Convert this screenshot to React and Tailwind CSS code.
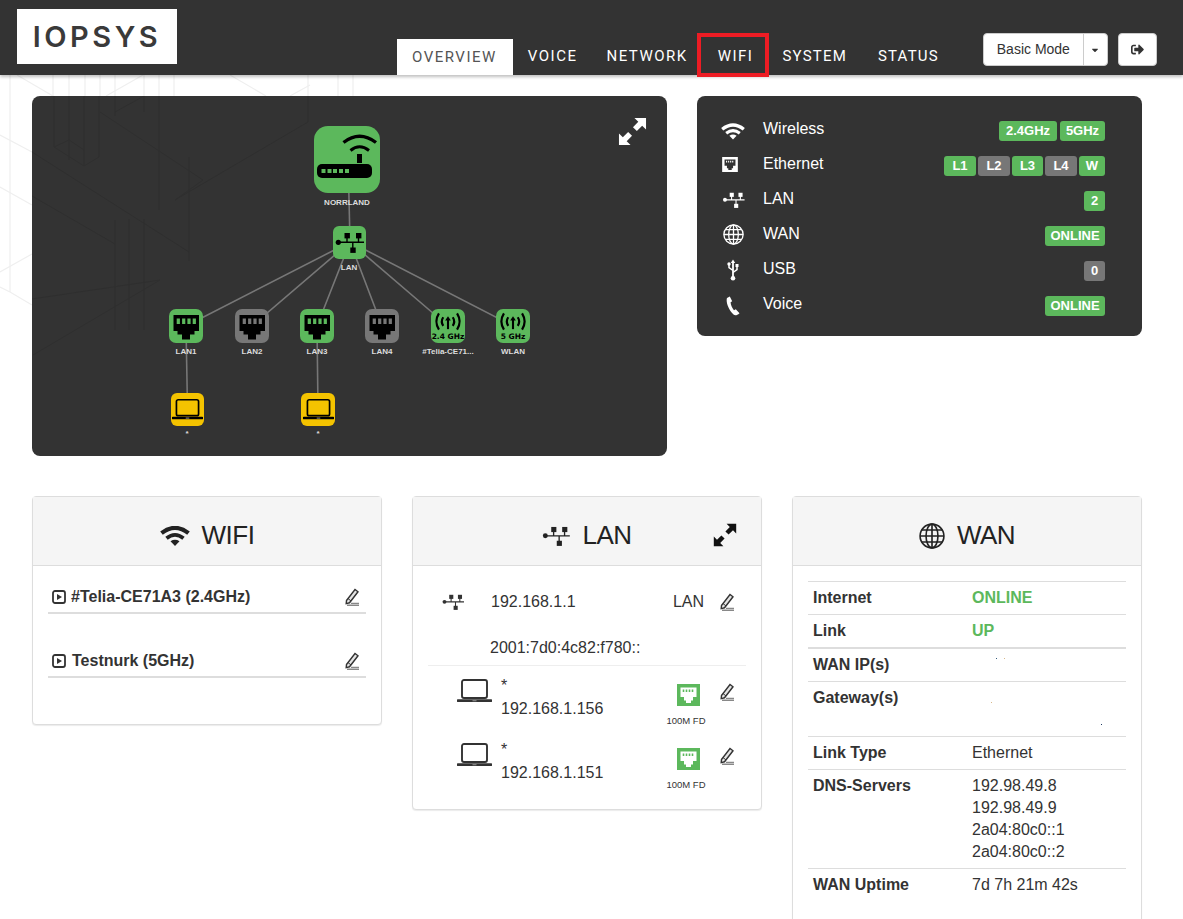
import { FaCaretDown, FaSignOutAlt } from 'react-icons/fa';

const green = 'bg-[#5cb85c]';
const gray = 'bg-[#777777]';

// --- icons ---
const WifiIcon = ({ className }) => (
  <svg viewBox="0 0 30 20" className={className} fill="none" stroke="currentColor">
    <path d="M1.5 7.2 Q15 -3.4 28.5 7.2" strokeWidth="4.2" />
    <path d="M6.5 12.2 Q15 5.5 23.5 12.2" strokeWidth="3.8" />
    <path d="M10.5 15.2 Q15 12.4 19.5 15.2 L15 20 Z" fill="currentColor" stroke="none" />
  </svg>
);

const NetIcon = ({ className }) => (
  <svg viewBox="2 6 29 21" className={className} fill="currentColor" stroke="currentColor">
    <circle cx="5.3" cy="16.3" r="2.6" stroke="none" />
    <path d="M5 16.3H31M14 10v6M25.5 10v6M19.8 16v8" fill="none" strokeWidth="1.4" />
    <rect x="11.5" y="7" width="5.4" height="5.4" stroke="none" />
    <rect x="23" y="7" width="5.4" height="5.4" stroke="none" />
    <rect x="17.3" y="21.5" width="5.4" height="5.4" stroke="none" />
  </svg>
);

const GlobeIcon = ({ className }) => (
  <svg viewBox="0 0 24 24" className={className} fill="none" stroke="currentColor" strokeWidth="1.5">
    <circle cx="12" cy="12" r="11" />
    <ellipse cx="12" cy="12" rx="5.5" ry="11" />
    <path d="M12 1v22M1 12h22M2.6 6.5h18.8M2.6 17.5h18.8" />
  </svg>
);

const ExpandIcon = ({ className }) => (
  <svg viewBox="0 0 30 30" className={className} fill="currentColor">
    <path d="M17 1H29V13L25 9L19.5 14.5L15.5 10.5L21 5Z" />
    <path d="M13 29H1V17L5 21L10.5 15.5L14.5 19.5L9 25Z" />
  </svg>
);

const PencilIcon = () => (
  <svg viewBox="0 0 14 18" className="w-[14px] h-[18px]" fill="none">
    <path d="M1.5 12.5 L10 1.5 L13 3.8 L4.5 14.8 L1.2 15.6 Z" fill="#e4e4e4" stroke="#333" strokeWidth="1.4" />
    <path d="M3 10.5 L6 13" stroke="#333" strokeWidth="1" />
    <path d="M6 15.4H14M2 17.2H14" stroke="#888" strokeWidth="1.4" />
  </svg>
);

const PlayBox = () => (
  <svg viewBox="0 0 14 14" className="w-[14px] h-[14px] shrink-0" fill="none">
    <rect x="1" y="1" width="12" height="12" rx="2" stroke="#333" strokeWidth="1.8" />
    <path d="M5 4L10 7L5 10Z" fill="#333" />
  </svg>
);

const LaptopIcon = ({ className }) => (
  <svg viewBox="0 0 35 24" className={className} fill="none" stroke="currentColor">
    <rect x="5" y="1" width="25" height="18" rx="2" strokeWidth="1.9" />
    <path d="M1 21.7H34" strokeWidth="2.8" strokeLinecap="round" />
    <path d="M15.5 21.7H19.5" stroke="#888" strokeWidth="1.2" />
  </svg>
);

const PhoneIcon = ({ className }) => (
  <svg viewBox="0 0 14 20" className={className} fill="currentColor">
    <path d="M3.8 0.5 L1 2 C-0.2 5.5 1.8 13 7.5 18.5 C9 19.8 11 19.5 13.5 17.2 L9.8 13.2 L8 14.2 C6.3 12.3 4.6 8.8 4.6 6.3 L6.2 5.3 Z" />
  </svg>
);

const UsbIcon = ({ className }) => (
  <svg viewBox="0 0 12 22" className={className} fill="currentColor" stroke="currentColor">
    <path d="M6 0.5L8.2 4H3.8Z" stroke="none" />
    <path d="M6 3.5V18" fill="none" strokeWidth="1.8" />
    <path d="M10 7.5V10.5L6 13.5M2 5.5V8.5L6 11.5" fill="none" strokeWidth="1.5" />
    <rect x="8.5" y="5" width="3" height="3" stroke="none" />
    <circle cx="2" cy="5" r="1.7" stroke="none" />
    <circle cx="6" cy="19.3" r="2.3" stroke="none" />
  </svg>
);

// port with the jack cut out, used in the status panel and the client rows
const PortBox = ({ className, cut, pin }) => (
  <svg viewBox="0 0 23 22" className={className}>
    <rect width="23" height="22" fill="currentColor" />
    <path d="M3.5 3.5H19.5V13H16V16.5H14V19H9V16.5H7V13H3.5Z" fill={cut} />
    <path d="M6.5 5.5V8M9.5 5.5V8M12.5 5.5V8M15.5 5.5V8" stroke={pin} strokeWidth="1.6" />
  </svg>
);

const JackGlyph = ({ pin }) => (
  <svg viewBox="0 0 34 34" className="w-full h-full">
    <path d="M4.5 6H30V22H25.5V25.5H21V30.5H13V25.5H8.5V22H4.5Z" fill="#000" />
    <path d="M9.3 9.5V15M14.7 9.5V15M20 9.5V15M25.3 9.5V15" stroke={pin} strokeWidth="3.2" />
  </svg>
);

const AntennaGlyph = () => (
  <svg viewBox="0 0 34 21" className="w-[34px] h-[20px]" fill="none" stroke="#000" strokeWidth="2.3">
    <path d="M7.5 1.5C4 7 4 13 7.5 18.5M26.5 1.5C30 7 30 13 26.5 18.5" />
    <path d="M12 5.5C10 8.5 10 11.5 12 14.5M22 5.5C24 8.5 24 11.5 22 14.5" />
    <path d="M17 4.5L20 9H14Z" fill="#000" stroke="none" />
    <path d="M17 8V18" strokeWidth="2.2" />
  </svg>
);

// --- diagram ---
const Label = ({ className, children }) => (
  <span className={`absolute -translate-x-1/2 text-[8px] leading-[10px] font-bold text-[#dddddd] whitespace-nowrap ${className}`}>
    {children}
  </span>
);

const TopologyNode = ({ className, color, children }) => (
  <div className={`absolute w-[34px] h-[34px] rounded-[7px] flex flex-col items-center ${color} ${className}`}>
    {children}
  </div>
);

const Topology = () => (
  <>
    <svg viewBox="0 0 635 360" className="absolute inset-0 w-full h-full" fill="none" stroke="#777777" strokeWidth="1.6">
      <path d="M316 60L318 146" />
      <path d="M318 146L154 230M318 146L220 230M318 146L285 230M318 146L350 230M318 146L416 230M318 146L481 230" />
      <path d="M154 230L155.5 313M285 230L286 313" />
    </svg>

    <div className="absolute left-[282px] top-[30px] w-[66px] h-[67px] rounded-[14px] bg-[#5cb85c]">
      <svg viewBox="0 0 66 67" className="w-full h-full">
        <path d="M29.5 16.5Q45.5 4 62 16.5" fill="none" stroke="#000" strokeWidth="3.4" />
        <path d="M36.5 24.5Q45.5 17 55 24.5" fill="none" stroke="#000" strokeWidth="3" />
        <rect x="43" y="28" width="5" height="9" fill="#000" />
        <rect x="3" y="38" width="55" height="14" rx="5" fill="#000" />
        <path d="M7.5 43h4v4h-4zM13.5 43h4v4h-4zM19 43h4v4h-4zM25 43h4v4h-4zM31 43h4v4h-4z" fill="#5cb85c" />
      </svg>
    </div>
    <Label className="left-[315px] top-[102px]">NORRLAND</Label>

    <div className="absolute left-[301px] top-[130px] w-[33px] h-[33px] rounded-[6px] bg-[#5cb85c] flex items-center justify-center">
      <NetIcon className="w-[29px] h-[21px] text-black" />
    </div>
    <Label className="left-[317px] top-[167px]">LAN</Label>

    <TopologyNode className="left-[137px] top-[213px]" color={green}><JackGlyph pin="#5cb85c" /></TopologyNode>
    <Label className="left-[154px] top-[251px]">LAN1</Label>
    <TopologyNode className="left-[203px] top-[213px]" color={gray}><JackGlyph pin="#777777" /></TopologyNode>
    <Label className="left-[220px] top-[251px]">LAN2</Label>
    <TopologyNode className="left-[268px] top-[213px]" color={green}><JackGlyph pin="#5cb85c" /></TopologyNode>
    <Label className="left-[285px] top-[251px]">LAN3</Label>
    <TopologyNode className="left-[333px] top-[213px]" color={gray}><JackGlyph pin="#777777" /></TopologyNode>
    <Label className="left-[350px] top-[251px]">LAN4</Label>

    <TopologyNode className="left-[399px] top-[213px] pt-[3px]" color={green}>
      <AntennaGlyph />
      <span className="mt-[1px] font-['DejaVu_Sans'] font-bold text-[7.5px] leading-[7px] text-black whitespace-nowrap">2.4 GHz</span>
    </TopologyNode>
    <Label className="left-[416px] top-[251px]">#Telia-CE71...</Label>
    <TopologyNode className="left-[464px] top-[213px] pt-[3px]" color={green}>
      <AntennaGlyph />
      <span className="mt-[1px] font-['DejaVu_Sans'] font-bold text-[7.5px] leading-[7px] text-black whitespace-nowrap">5 GHz</span>
    </TopologyNode>
    <Label className="left-[481px] top-[251px]">WLAN</Label>

    <div className="absolute left-[139px] top-[297px] w-[33px] h-[33px] rounded-[6px] bg-[#f4c300] flex items-center justify-center">
      <LaptopIcon className="w-[31px] h-[23px] text-black" />
    </div>
    <Label className="left-[155px] top-[333px]">*</Label>
    <div className="absolute left-[269px] top-[297px] w-[34px] h-[33px] rounded-[6px] bg-[#f4c300] flex items-center justify-center">
      <LaptopIcon className="w-[31px] h-[23px] text-black" />
    </div>
    <Label className="left-[286px] top-[333px]">*</Label>
  </>
);

// --- status panel ---
const Badge = ({ on = true, className, children }) => (
  <span className={`h-[20px] flex items-center justify-center rounded-[3px] text-[13px] font-bold text-white ${on ? green : gray} ${className}`}>
    {children}
  </span>
);

const StatusRow = ({ icon, label, children }) => (
  <div className="h-[35px] flex items-center">
    <div className="w-[24px] mt-[2px] flex justify-center text-white">{icon}</div>
    <span className="ml-[18px] text-[16px] text-white">{label}</span>
    <div className="ml-auto mt-[5px] flex gap-[2px]">{children}</div>
  </div>
);

const CardHead = ({ icon, title, extra }) => (
  <div className="relative h-[69px] pt-[9px] bg-[#f5f5f5] border-b border-[#dddddd] flex items-center justify-center gap-[12px] text-[#222222]">
    {icon}
    <span className="text-[26px] tracking-[-0.5px]">{title}</span>
    {extra}
  </div>
);

const Card = ({ className, children }) => (
  <div className={`w-[350px] bg-white border border-[#dddddd] rounded-[4px] shadow-[0_1px_1px_rgba(0,0,0,.08)] ${className}`}>
    {children}
  </div>
);

const WifiRow = ({ className, gap, children }) => (
  <div className={`h-[34px] pt-[2px] flex items-center border-b-2 border-[#dddddd] pl-[4px] pr-[7px] ${className}`}>
    <PlayBox />
    <span className={`font-bold text-[16px] text-[#333333] ${gap}`}>{children}</span>
    <span className="ml-auto"><PencilIcon /></span>
  </div>
);

const ClientRow = ({ ip }) => (
  <div className="h-[64px] flex">
    <LaptopIcon className="w-[35px] h-[24px] ml-[29px] mt-[13px] text-[#333333]" />
    <div className="ml-[9px] mt-[7px] text-[16px] leading-[25px] text-[#333333]">
      <div className="h-[23px]">*</div>
      <div>{ip}</div>
    </div>
    <div className="ml-auto mr-[7px] flex">
      <div className="w-[68px] mt-[18px] flex flex-col items-center">
        <PortBox className="w-[23px] h-[22px] ml-[4px] text-[#5cb85c]" cut="#ffffff" pin="#5cb85c" />
        <span className="mt-[9px] text-[9.5px] leading-[12px] text-[#333333]">100M FD</span>
      </div>
      <div className="w-[19px] pt-[17px]"><PencilIcon /></div>
    </div>
  </div>
);

const WanRow = ({ label, className = '', children }) => (
  <div className={`flex border-t border-[#dddddd] px-[5px] py-[5px] text-[16px] leading-[22px] text-[#333333] ${className}`}>
    <div className="w-[159px] font-bold">{label}</div>
    <div className="relative flex-1">{children}</div>
  </div>
);

export default function App() {
  return (
    <div className="relative h-[919px] overflow-hidden bg-white font-['Liberation_Sans',sans-serif]">
      {/* faint line work behind the page */}
      <svg viewBox="0 0 400 320" className="absolute left-0 top-0 w-[400px] h-[320px]" fill="none" stroke="#efefef" strokeWidth="1.2">
        <path d="M10 75V292M53 75V96M69 75V96M85 75V96M100 75V96M115 75V96M144 75V96M159 75V96M174 75V96M308 75V96M338 75V96M353 75V96" />
        <path d="M0 135L32 152M0 187L32 205M0 272L32 254M0 287L10 292L32 305M17 75L53 96M143 75L106 96M230 75L266 96M310 85L290 96" />
      </svg>

      <header className="relative h-[75px] bg-[#333333] shadow-[0_2px_3px_rgba(0,0,0,.25)] flex">
        <div className="ml-[17px] mt-[9px] w-[160px] h-[55px] bg-white flex items-center justify-center">
          <span className="font-['Inter'] font-semibold text-[29px] leading-none tracking-[3.5px] text-[#3a3a3a]">IOPSYS</span>
        </div>

        <nav className="ml-[220px] flex self-end font-['Roboto'] text-[15px] tracking-[1.5px] text-white h-[36px]">
          <a className="pl-[15px] pr-[16px] bg-white text-[#555555] flex items-center">OVERVIEW</a>
          <a className="px-[15px] flex items-center -mt-[1px]">VOICE</a>
          <a className="px-[15px] -ml-px flex items-center -mt-[1px]">NETWORK</a>
          <a className="relative px-[15px] flex items-center -mt-[1px]">
            WIFI
            <span className="absolute -left-[6px] -right-[1px] -top-[5px] -bottom-[2px] border-[4px] border-[#ed1c24]" />
          </a>
          <a className="px-[15px] -ml-px flex items-center -mt-[1px] tracking-[1.2px]">SYSTEM</a>
          <a className="px-[15px] ml-[1px] flex items-center -mt-[1px] tracking-[1.2px]">STATUS</a>
        </nav>

        <div className="ml-[29px] mt-[33px] flex h-[33px] items-start text-[14px] text-[#333333]">
          <button className="h-[33px] w-[101px] bg-white border border-[#cccccc] rounded-l-[4px]">Basic Mode</button>
          <button className="h-[33px] w-[25px] -ml-px bg-white border border-[#cccccc] rounded-r-[4px] flex items-center justify-center">
            <FaCaretDown className="w-[10px] h-[10px]" />
          </button>
          <button className="h-[33px] w-[39px] ml-[10px] bg-white border border-[#cccccc] rounded-[4px] flex items-center justify-center">
            <FaSignOutAlt className="w-[13px] h-[13px]" />
          </button>
        </div>
      </header>

      <main className="relative pl-[32px]">
        <section className="pt-[21px] flex items-start gap-[30px]">
          <div className="relative w-[635px] h-[360px] rounded-[8px] bg-[#333333]">
            <svg viewBox="0 0 635 360" className="absolute inset-0 w-full h-full" fill="none" stroke="#2f2f2f" strokeWidth="1">
              <path d="M22 0V51M37 0V64M52 0V70M67 0V61M83 0V20M112 0V16M127 0V114M157 61V165M83 124V234M97 123V234M112 123V234M276 0V26" />
              <path d="M0 56L157 156M68 16L171 84M143 104L276 26M143 104L171 84M22 51L52 70L67 61M22 51L37 44L52 54M128 184L1 259M0 203L128 184M0 100L83 148M83 16L112 0" />
            </svg>
            <Topology />
            <ExpandIcon className="absolute right-[20px] top-[21px] w-[29px] h-[29px] text-white" />
          </div>

          <div className="w-[445px] h-[240px] rounded-[8px] bg-[#333333] pt-[15px] pl-[24px] pr-[37px]">
            <StatusRow icon={<WifiIcon className="w-[24px] h-[17px] mt-[3px]" />} label="Wireless">
              <Badge className="w-[58px] mr-[1px]">2.4GHz</Badge><Badge className="w-[45px]">5GHz</Badge>
            </StatusRow>
            <StatusRow icon={<PortBox className="w-[16px] h-[15px] -translate-x-[3px] text-white" cut="#333333" pin="#ffffff" />} label="Ethernet">
              <Badge className="w-[32px]">L1</Badge>
              <Badge on={false} className="w-[32px]">L2</Badge>
              <Badge className="w-[31px]">L3</Badge>
              <Badge on={false} className="w-[32px]">L4</Badge>
              <Badge className="w-[26px]">W</Badge>
            </StatusRow>
            <StatusRow icon={<NetIcon className="w-[23px] h-[16px]" />} label="LAN">
              <Badge className="w-[21px]">2</Badge>
            </StatusRow>
            <StatusRow icon={<GlobeIcon className="w-[21px] h-[21px]" />} label="WAN">
              <Badge className="w-[60px]">ONLINE</Badge>
            </StatusRow>
            <StatusRow icon={<UsbIcon className="w-[12px] h-[22px]" />} label="USB">
              <Badge on={false} className="w-[21px]">0</Badge>
            </StatusRow>
            <StatusRow icon={<PhoneIcon className="w-[14px] h-[20px] mt-[3px]" />} label="Voice">
              <Badge className="w-[60px]">ONLINE</Badge>
            </StatusRow>
          </div>
        </section>

        <section className="mt-[40px] flex items-start gap-[30px]">
          <Card className="h-[229px]">
            <CardHead icon={<WifiIcon className="w-[30px] h-[20px]" />} title="WIFI" />
            <div className="px-[15px] pt-[14px]">
              <WifiRow gap="ml-[5px]">#Telia-CE71A3 (2.4GHz)</WifiRow>
              <WifiRow className="mt-[30px]" gap="ml-[6px]">Testnurk (5GHz)</WifiRow>
            </div>
          </Card>

          <Card className="h-[314px]">
            <CardHead
              icon={<NetIcon className="w-[28px] h-[20px]" />}
              title="LAN"
              extra={<ExpandIcon className="absolute right-[24px] top-[26px] w-[24px] h-[24px] text-[#111111]" />}
            />
            <div className="px-[15px] pt-[1px] text-[16px] text-[#333333]">
              <div className="h-[99px] border-b border-[#eeeeee]">
                <div className="flex items-center h-[70px]">
                  <NetIcon className="w-[22px] h-[16px] ml-[14px]" />
                  <span className="ml-[27px]">192.168.1.1</span>
                  <span className="ml-auto mr-[16px]">LAN</span>
                  <span className="mr-[12px]"><PencilIcon /></span>
                </div>
                <div className="pl-[62px] -mt-[1px]">2001:7d0:4c82:f780::</div>
              </div>
              <ClientRow ip="192.168.1.156" />
              <ClientRow ip="192.168.1.151" />
            </div>
          </Card>

          <Card className="h-[500px]">
            <CardHead icon={<GlobeIcon className="w-[26px] h-[26px]" />} title="WAN" />
            <div className="px-[15px] pt-[15px]">
              <WanRow label="Internet"><span className="font-bold text-[#5cb85c]">ONLINE</span></WanRow>
              <WanRow label="Link" className="border-b border-b-[#dddddd]"><span className="font-bold text-[#5cb85c]">UP</span></WanRow>
              <WanRow label="WAN IP(s)" className="h-[33px]">
                <span className="absolute left-[24px] top-[4px] w-px h-px bg-[#355c7d]" />
                <span className="absolute left-[32px] top-[4px] w-px h-px bg-[#d8b98a]" />
              </WanRow>
              <WanRow label="Gateway(s)" className="h-[55px]">
                <span className="absolute left-[19px] top-[15px] w-px h-px bg-[#d8b98a]" />
                <span className="absolute left-[129px] top-[37px] w-px h-px bg-[#1f3b63]" />
              </WanRow>
              <WanRow label="Link Type">Ethernet</WanRow>
              <WanRow label="DNS-Servers">
                192.98.49.8<br />192.98.49.9<br />2a04:80c0::1<br />2a04:80c0::2
              </WanRow>
              <WanRow label="WAN Uptime">7d 7h 21m 42s</WanRow>
            </div>
          </Card>
        </section>
      </main>
    </div>
  );
}
